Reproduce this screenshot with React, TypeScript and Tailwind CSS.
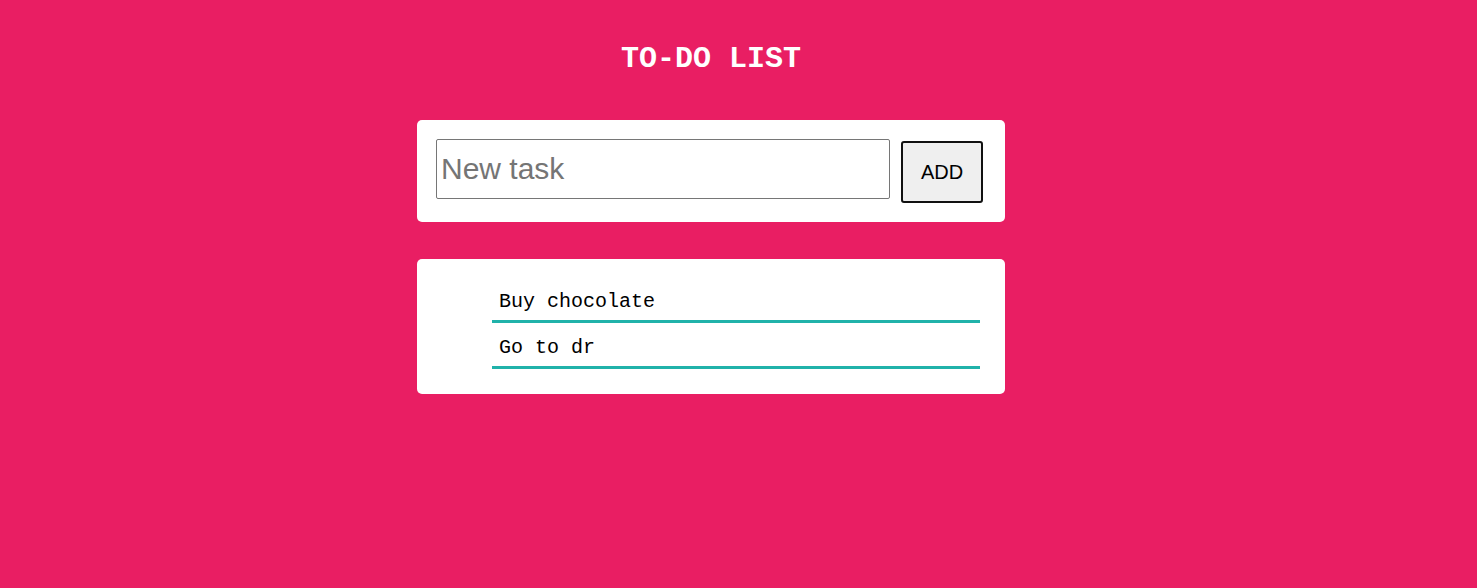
const tasks = ['Buy chocolate', 'Go to dr']

export default function App() {
  return (
    <div className="min-h-[588px] w-full bg-[#e91e63]">
      <div className="ml-[417px] w-[588px] pt-[42px]">
        {/* Title */}
        <h1 className="text-center font-['Liberation_Mono','Courier_New',monospace] text-[30px] font-bold leading-[34px] text-white">
          TO-DO LIST
        </h1>

        {/* Input card */}
        <div className="mt-[44px] flex items-start rounded-[5px] bg-white pt-[19px] pr-[22px] pb-[19px] pl-[19px]">
          <input
            type="text"
            placeholder="New task"
            className="h-[60px] w-[454px] rounded-[2px] border border-[#767676] px-[4px] font-['Liberation_Sans',Arial,sans-serif] text-[30px] text-black outline-none placeholder:text-[#757575]"
          />
          <button className="mt-[2px] ml-[11px] h-[62px] w-[82px] rounded-[3px] border-2 border-[#111] bg-[#efefef] font-['Liberation_Sans',Arial,sans-serif] text-[20px] text-black">
            ADD
          </button>
        </div>

        {/* Task list */}
        <div className="mt-[37px] rounded-[5px] bg-white pt-[18px] pr-[25px] pb-[25px] pl-[75px]">
          <ul>
            {tasks.map((t) => (
              <li
                key={t}
                className="border-b-[3px] border-[#20b2aa] px-[7px] pt-[10px] pb-[3px] font-['Liberation_Mono','Courier_New',monospace] text-[20px] leading-[30px] text-black"
              >
                {t}
              </li>
            ))}
          </ul>
        </div>
      </div>
    </div>
  )
}
